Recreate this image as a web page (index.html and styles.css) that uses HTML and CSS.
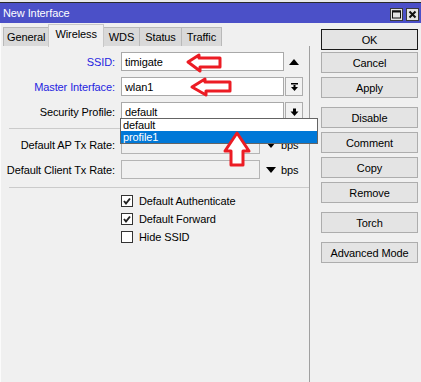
FILE: index.html
```html
<!DOCTYPE html>
<html>
<head>
<meta charset="utf-8">
<link rel="stylesheet" href="styles.css">
</head>
<body>
<div class="topstrip"></div>
<div class="titlebar">
  <span class="title">New Interface</span>
  <div class="tbtns">
    <span class="tbtn"><svg width="11" height="11" viewBox="0 0 11 11"><rect x="1.5" y="2" width="8" height="7" fill="none" stroke="#111" stroke-width="1"/><rect x="1" y="1.5" width="9" height="2" fill="#111"/></svg></span>
    <span class="tbtn"><svg width="11" height="11" viewBox="0 0 11 11"><path d="M2.5 2.5 L8.5 8.5 M8.5 2.5 L2.5 8.5" stroke="#111" stroke-width="2"/></svg></span>
  </div>
</div>
<div class="main">
  <div class="left">
    <div class="tabs">
      <span class="tab first">General</span>
      <span class="tab active">Wireless</span>
      <span class="tab">WDS</span>
      <span class="tab">Status</span>
      <span class="tab">Traffic</span>
    </div>
    <div class="panel">
      <div class="row">
        <span class="lbl blue">SSID:</span>
        <span class="field">timigate</span>
        <span class="spin"><svg width="10" height="6" viewBox="0 0 10 6"><polygon points="0,6 5,0 10,6" fill="#000"/></svg></span>
      </div>
      <div class="row">
        <span class="lbl blue">Master Interface:</span>
        <span class="field">wlan1</span>
        <span class="ddbtn"><svg width="9" height="8" viewBox="0 0 9 8"><rect x="1" y="0" width="7" height="1.5" fill="#000"/><rect x="3.5" y="2" width="2" height="2" fill="#000"/><polygon points="1,4 8,4 4.5,8" fill="#000"/></svg></span>
      </div>
      <div class="row">
        <span class="lbl">Security Profile:</span>
        <span class="field">default</span>
        <span class="ddbtn"><svg width="9" height="8" viewBox="0 0 9 8"><rect x="3" y="0.5" width="3" height="3.5" fill="#000"/><polygon points="0.5,3.5 8.5,3.5 4.5,8" fill="#000"/></svg></span>
      </div>
      <div class="sep"></div>
      <div class="row rowfirst">
        <span class="lbl">Default AP Tx Rate:</span>
        <span class="field rate"></span>
        <span class="tri"><svg width="10" height="6" viewBox="0 0 10 6"><polygon points="0,0 10,0 5,6" fill="#000"/></svg></span>
        <span class="unit">bps</span>
      </div>
      <div class="row">
        <span class="lbl">Default Client Tx Rate:</span>
        <span class="field rate"></span>
        <span class="tri"><svg width="10" height="6" viewBox="0 0 10 6"><polygon points="0,0 10,0 5,6" fill="#000"/></svg></span>
        <span class="unit">bps</span>
      </div>
      <div class="sep sep2"></div>
      <div class="chk chkfirst">
        <span class="box"><svg width="10" height="10" viewBox="0 0 10 10"><polyline points="2,5 4,7.5 8,2.5" fill="none" stroke="#222" stroke-width="2"/></svg></span>
        <span class="ctext">Default Authenticate</span>
      </div>
      <div class="chk">
        <span class="box"><svg width="10" height="10" viewBox="0 0 10 10"><polyline points="2,5 4,7.5 8,2.5" fill="none" stroke="#222" stroke-width="2"/></svg></span>
        <span class="ctext">Default Forward</span>
      </div>
      <div class="chk">
        <span class="box"></span>
        <span class="ctext">Hide SSID</span>
      </div>
    </div>
  </div>
  <div class="btns">
    <span class="btn ok">OK</span>
    <span class="btn tight">Cancel</span>
    <span class="btn">Apply</span>
    <span class="btn group">Disable</span>
    <span class="btn">Comment</span>
    <span class="btn">Copy</span>
    <span class="btn">Remove</span>
    <span class="btn group">Torch</span>
    <span class="btn group">Advanced Mode</span>
  </div>
</div>
<div class="ddlist">
  <div class="opt">default</div>
  <div class="opt sel">profile1</div>
</div>
<svg class="annot" width="421" height="382" viewBox="0 0 421 382">
  <g fill="#fff" stroke="#ec1c24" stroke-width="3" stroke-linejoin="round">
    <polygon points="188,62 199,55 199,58 220,58 220,67 200,67 200,71"/>
    <polygon points="192,87 205,79 205,82 230,82 230,91 206,91 206,95"/>
    <polygon points="237,133 249,151 243,151 243,165 231,165 231,151 225,151"/>
  </g>
</svg>
</body>
</html>
```
FILE: styles.css
```css
body {
  margin: 0;
  width: 421px;
  height: 382px;
  overflow: hidden;
  background: #f0f0f0;
  font-family: "Liberation Sans", Arial, sans-serif;
  font-size: 11px;
  letter-spacing: -0.1px;
  color: #000;
  position: relative;
}
.topstrip {
  height: 2px;
  background: #e9e9e9;
}
.titlebar {
  height: 20px;
  border-top: 1px solid #2a2a2a;
  background: #4b50c8;
  color: #fff;
  display: flex;
  align-items: center;
  justify-content: space-between;
  padding: 0 2px 0 3px;
}
.title {
  font-size: 11px;
}
.tbtns {
  display: flex;
  gap: 3px;
  margin-top: 3px;
}
.tbtn {
  width: 13px;
  height: 13px;
  box-sizing: border-box;
  border: 1px solid #3a3a3a;
  background: #e4e4e4;
  display: flex;
  align-items: center;
  justify-content: center;
}
.main {
  display: flex;
  height: 359px;
}
.left {
  width: 310px;
  display: flex;
  flex-direction: column;
}
.tabs {
  height: 23px;
  display: flex;
  align-items: flex-end;
  padding-left: 2px;
  border-left: 1px solid #fbfbfb;
}
.tab {
  height: 19px;
  box-sizing: border-box;
  padding: 0 5px;
  border: 1px solid #b9b9b9;
  border-bottom: none;
  background: #d9d9d9;
  display: flex;
  align-items: center;
  margin-right: -1px;
}
.tab.first {
  padding: 0 3px;
}
.tab.active {
  height: 23px;
  margin-bottom: -1px;
  background: #f0f0f0;
  border-color: #c8c8c8;
  padding: 0 6px;
  align-items: flex-start;
  padding-top: 3px;
  position: relative;
  z-index: 1;
}
.panel {
  flex: 1;
  border-left: 1px solid #fbfbfb;
  border-right: 1px solid #a0a0a0;
  padding-top: 6px;
}
.row {
  display: flex;
  align-items: center;
  height: 19px;
  margin-top: 6px;
}
.row:first-child {
  margin-top: 0;
}
.row.rowfirst {
  margin-top: 6px;
}
.lbl {
  width: 114px;
  text-align: right;
  white-space: nowrap;
}
.lbl.blue {
  color: #2424e0;
}
.field {
  margin-left: 6px;
  width: 163px;
  height: 19px;
  box-sizing: border-box;
  border: 1px solid #a9a9a9;
  background: #fff;
  padding-left: 3px;
  display: flex;
  align-items: center;
}
.field.rate {
  width: 139px;
  background: #f0f0f0;
  border-color: #b4b4b4;
}
.spin {
  width: 18px;
  margin-left: 1px;
  display: flex;
  justify-content: center;
  align-items: center;
}
.ddbtn {
  width: 18px;
  height: 19px;
  margin-left: 1px;
  box-sizing: border-box;
  border: 1px solid #adadad;
  background: #f2f2f2;
  display: flex;
  justify-content: center;
  align-items: center;
}
.tri {
  margin-left: 6px;
  display: flex;
  align-items: center;
}
.unit {
  margin-left: 5px;
}
.sep {
  height: 1px;
  background: #cbcbcb;
  margin: 7px 0 0 8px;
}
.sep2 {
  margin-top: 8px;
}
.chk {
  display: flex;
  align-items: center;
  height: 12px;
  margin-top: 6px;
  padding-left: 120px;
}
.chk.chkfirst {
  margin-top: 7px;
}
.box {
  width: 12px;
  height: 12px;
  box-sizing: border-box;
  border: 1px solid #333;
  background: #fff;
  display: flex;
  align-items: center;
  justify-content: center;
}
.ctext {
  margin-left: 6px;
}
.btns {
  width: 97px;
  padding: 6px 0 0 11px;
  display: flex;
  flex-direction: column;
}
.btn {
  height: 21px;
  box-sizing: border-box;
  border: 1px solid #adadad;
  background: #e4e4e4;
  display: flex;
  align-items: center;
  justify-content: center;
  margin-top: 4px;
}
.btn.ok {
  margin-top: 0;
  border-color: #1a1a1a;
}
.btn.tight {
  margin-top: 2px;
}
.btn.group {
  margin-top: 9px;
}
.ddlist {
  position: absolute;
  left: 120px;
  top: 118px;
  width: 198px;
  box-sizing: border-box;
  border: 1px solid #646464;
  background: #fff;
  z-index: 2;
}
.opt {
  height: 12px;
  line-height: 12px;
  padding-left: 2px;
}
.opt.sel {
  background: #0078d7;
  color: #fff;
}
.annot {
  position: absolute;
  left: 0;
  top: 0;
  z-index: 3;
  pointer-events: none;
}
```
